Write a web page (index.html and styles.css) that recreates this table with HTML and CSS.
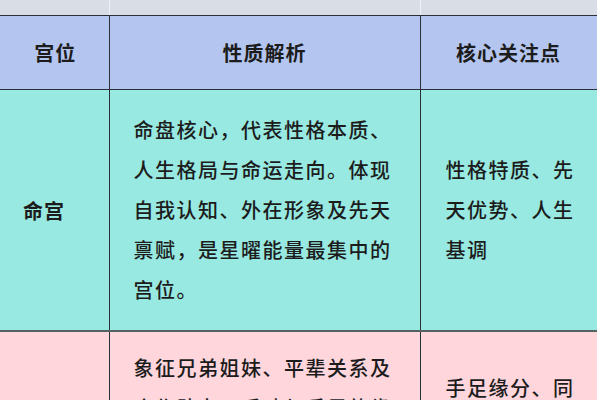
FILE: index.html
```html
<!DOCTYPE html>
<html lang="zh">
<head>
<meta charset="utf-8">
<title>宫位解析</title>
<link rel="stylesheet" href="styles.css">
</head>
<body>
<div class="frame">
<table class="palace">
  <colgroup>
    <col class="c1">
    <col class="c2">
    <col class="c3">
  </colgroup>
  <tr class="prev"><td></td><td></td><td></td></tr>
  <tr class="head">
    <th class="h1">宫位</th>
    <th>性质解析</th>
    <th>核心关注点</th>
  </tr>
  <tr class="teal">
    <td class="name">命宫</td>
    <td class="desc">命盘核心，代表性格本质、人生格局与命运走向。体现自我认知、外在形象及先天禀赋，是星曜能量最集中的宫位。</td>
    <td class="focus">性格特质、先天优势、人生基调</td>
  </tr>
  <tr class="pink">
    <td class="name">兄弟宫</td>
    <td class="desc">象征兄弟姐妹、平辈关系及合作助力，反映与手足的缘分深浅、相处模式及互助程度。</td>
    <td class="focus">手足缘分、同辈助力、合作关系</td>
  </tr>
</table>
</div>
</body>
</html>
```

FILE: styles.css
```css
html, body {
  margin: 0;
  padding: 0;
  background: #ffffff;
}

.frame {
  width: 597px;
  height: 400px;
  overflow: hidden;
}

.palace {
  border-collapse: collapse;
  table-layout: fixed;
  width: 597px;
  font-family: "Noto Sans CJK SC", "Noto Sans", sans-serif;
  color: #1c1c1c;
}

.c1 { width: 109px; }
.c2 { width: 311px; }
.c3 { width: 177px; }

.palace td, .palace th {
  border: 1px solid #2b3038;
  padding: 0;
}

.palace tr > :first-child {
  border-left: none;
}

.prev td {
  height: 15px;
  background: #d9dee6;
  border-top: none;
  border-left-color: #eef1f5;
  border-right-color: #eef1f5;
  border-bottom: 1px solid #2b3038;
}

.prev td:last-child {
  border-right: 1px solid #2b3038;
}

.head th {
  height: 73px;
  background: #b4c6ef;
  font-size: 20px;
  font-weight: 700;
  letter-spacing: 1px;
  text-align: center;
  vertical-align: middle;
}

.head .h1 {
  padding-left: 2px;
}

.teal td {
  background: #98e9e1;
  height: 200px;
  padding-top: 20px;
  padding-bottom: 20px;
  border-bottom: 2px solid #56625f;
}

.pink td {
  background: #fed6dc;
  vertical-align: top;
}

.name {
  font-size: 20px;
  font-weight: 700;
  letter-spacing: 1px;
  text-align: left;
  padding-left: 23px !important;
  vertical-align: middle;
}

.desc, .focus {
  font-size: 20px;
  line-height: 40px;
  letter-spacing: 1.5px;
  font-weight: 500;
  vertical-align: middle;
}

.desc {
  padding-left: 24px !important;
  padding-right: 22px !important;
}

.focus {
  padding-left: 25px !important;
  padding-right: 14px !important;
}

.pink .desc {
  padding-top: 16px !important;
  vertical-align: top;
}

.pink .focus {
  padding-top: 36px !important;
  vertical-align: top;
}

.pink .name {
  padding-top: 100px !important;
  vertical-align: top;
}
```
